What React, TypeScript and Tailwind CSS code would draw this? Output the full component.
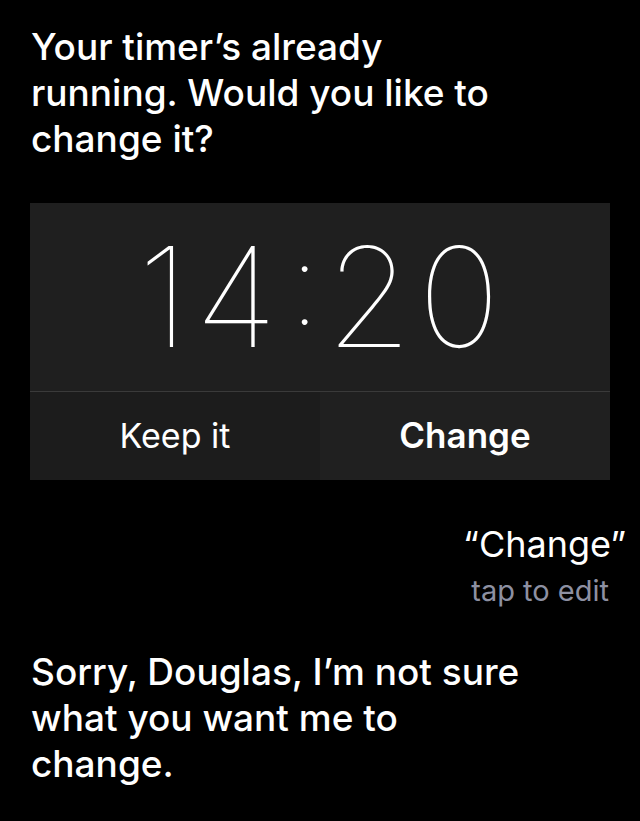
export default function App() {
  return (
    <div className="w-[640px] h-[821px] bg-black text-white overflow-hidden" style={{ fontFamily: 'Inter, "Noto Sans", sans-serif' }}>
      <p className="pt-[24px] pl-[31px] pr-[30px] text-[37px] leading-[46px] font-medium">
        Your timer’s already<br />running. Would you like to<br />change it?
      </p>

      <div className="mx-[30px] mt-[41px] bg-[#1f1f1f]">
        <div className="h-[189px] flex items-center justify-center border-b border-[#3a3a3a]">
          <div className="flex items-baseline text-[139px] leading-none font-thin pb-[2px] pl-[4px]">
            <span className="tracking-[6px]">14</span>
            <span className="relative -top-[22px] px-[6px] text-[112px]">:</span>
            <span className="tracking-[6px]">20</span>
          </div>
        </div>
        <div className="grid grid-cols-2 h-[88px]">
          <button className="flex items-center justify-center text-[34px] text-white bg-[#1c1c1c] pb-[2px]">Keep it</button>
          <button className="flex items-center justify-center text-[35px] font-semibold text-white bg-[#202020] pb-[2px]">Change</button>
        </div>
      </div>

      <div className="mt-[42px] pr-[14px] flex flex-col items-end">
        <span className="text-[36px] leading-[44px]">“Change”</span>
        <span className="mt-[7px] pr-[17px] text-[29px] leading-[36px] text-[#8d90a2]">tap to edit</span>
      </div>

      <p className="mt-[40px] pl-[31px] pr-[30px] text-[37px] leading-[46px] font-medium">
        Sorry, Douglas, I’m not sure<br />what you want me to<br />change.
      </p>
    </div>
  )
}
